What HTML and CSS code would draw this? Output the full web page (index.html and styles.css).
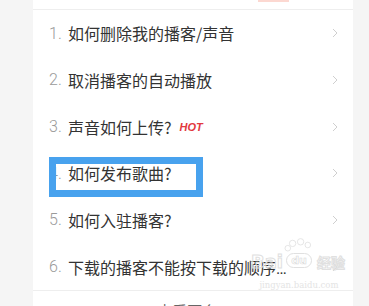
FILE: index.html
```html
<!DOCTYPE html>
<html lang="zh">
<head>
<meta charset="utf-8">
<link rel="stylesheet" href="styles.css">
</head>
<body>
<div class="card">
  <div class="head"><span class="badge"></span></div>
  <ul class="list">
    <li class="row"><span class="num">1.</span><span class="txt">如何删除我的播客/声音</span><svg class="chev" viewBox="0 0 6 10"><polyline points="1,1 5,5 1,9"/></svg></li>
    <li class="row"><span class="num">2.</span><span class="txt">取消播客的自动播放</span><svg class="chev" viewBox="0 0 6 10"><polyline points="1,1 5,5 1,9"/></svg></li>
    <li class="row"><span class="num">3.</span><span class="txt">声音如何上传?</span><span class="hot">HOT</span><svg class="chev" viewBox="0 0 6 10"><polyline points="1,1 5,5 1,9"/></svg></li>
    <li class="row"><span class="num">4.</span><span class="txt">如何发布歌曲?</span><svg class="chev" viewBox="0 0 6 10"><polyline points="1,1 5,5 1,9"/></svg></li>
    <li class="row"><span class="num">5.</span><span class="txt">如何入驻播客?</span><svg class="chev" viewBox="0 0 6 10"><polyline points="1,1 5,5 1,9"/></svg></li>
    <li class="row"><span class="num">6.</span><span class="txt clip">下载的播客不能按下载的顺序播放怎么办</span><svg class="chev" viewBox="0 0 6 10"><polyline points="1,1 5,5 1,9"/></svg></li>
  </ul>
  <div class="more">查看更多 &gt;</div>
</div>
<div class="highlight"></div>
<div class="watermark">
  <div class="wm-top">
    <span class="wm-bai">Bai</span>
    <span class="wm-paw">
      <svg class="paw" viewBox="0 0 40 26"><circle cx="12" cy="6" r="4"/><circle cx="22" cy="4" r="4"/><circle cx="31" cy="8" r="3.5"/><circle cx="6" cy="12" r="3.5"/></svg>
      <span class="wm-du">du</span>
    </span>
    <span class="wm-jy">经验</span>
  </div>
  <div class="wm-url">jingyan.baidu.com</div>
</div>
</body>
</html>
```
FILE: styles.css
```css
html, body {
  margin: 0;
  padding: 0;
}
body {
  background: #f5f5f5;
  width: 369px;
  height: 306px;
  overflow: hidden;
  position: relative;
  font-family: Roboto, "Noto Sans CJK SC", sans-serif;
}
.card {
  margin-left: 33px;
  width: 320px;
  background: #fff;
  height: 306px;
  overflow: hidden;
}
.head {
  height: 9px;
  border-bottom: 1px solid #eeeeee;
}
.badge {
  display: block;
  margin-left: 225px;
  width: 31px;
  height: 2px;
  background: #fcd8d1;
}
.list {
  list-style: none;
  margin: 0;
  padding: 0;
  display: flex;
  flex-direction: column;
}
.row {
  height: 46.67px;
  display: flex;
  align-items: center;
  padding: 0 15px 0 16px;
}
.num {
  width: 19px;
  flex: none;
  font-size: 16px;
  color: #9a9a9a;
  font-weight: 300;
}
.txt {
  font-size: 16px;
  color: #333;
  font-family: "Noto Sans CJK SC", sans-serif;
  white-space: nowrap;
}
.txt.clip {
  width: 222px;
  overflow: hidden;
  text-overflow: ellipsis;
  font-family: Roboto, "Noto Sans CJK SC", sans-serif;
}
.hot {
  margin-left: 8px;
  font-family: "Liberation Sans", Arial, sans-serif;
  font-size: 11px;
  font-weight: bold;
  font-style: italic;
  color: #e2393e;
}
.chev {
  margin-left: auto;
  width: 6px;
  height: 10px;
  flex: none;
}
.chev polyline {
  fill: none;
  stroke: #cfcfcf;
  stroke-width: 1;
}
.more {
  border-top: 1px solid #eeeeee;
  height: 40px;
  line-height: 40px;
  text-align: center;
  font-size: 15px;
  color: #666;
  font-family: "Noto Sans CJK SC", sans-serif;
}
.highlight {
  position: absolute;
  left: 49px;
  top: 157px;
  width: 154px;
  height: 40px;
  box-sizing: border-box;
  border: 7px solid #48a2ee;
}
.watermark {
  position: absolute;
  left: 251px;
  top: 238px;
  width: 96px;
  color: transparent;
  white-space: nowrap;
}
.wm-top {
  display: flex;
  align-items: flex-end;
  height: 34px;
}
.wm-bai {
  flex: none;
  font-family: "DejaVu Sans", sans-serif;
  font-size: 18px;
  font-weight: bold;
  -webkit-text-stroke: 1px #e0e0e0;
  line-height: 20px;
}
.wm-paw {
  flex: none;
  position: relative;
  width: 32px;
  height: 34px;
  display: flex;
  align-items: flex-end;
  justify-content: center;
}
.paw {
  position: absolute;
  left: 0;
  top: 0;
  width: 32px;
  height: 22px;
}
.paw circle {
  fill: #fff;
  stroke: #e0e0e0;
  stroke-width: 1;
}
.wm-du {
  font-family: "DejaVu Sans", sans-serif;
  font-size: 11px;
  font-weight: bold;
  color: #fff;
  -webkit-text-stroke: 0.6px #d8d8d8;
  border: 1px solid #e0e0e0;
  border-radius: 8px;
  padding: 0 4px;
  line-height: 13px;
  margin-bottom: 4px;
}
.wm-jy {
  flex: none;
  font-family: "Noto Sans CJK SC", sans-serif;
  font-size: 14px;
  font-weight: bold;
  -webkit-text-stroke: 1px #e0e0e0;
  line-height: 20px;
  margin-left: 2px;
}
.wm-url {
  font-family: "DejaVu Serif", serif;
  font-size: 8.5px;
  color: #e4e4e4;
  text-align: center;
  margin-top: 8px;
}
```
